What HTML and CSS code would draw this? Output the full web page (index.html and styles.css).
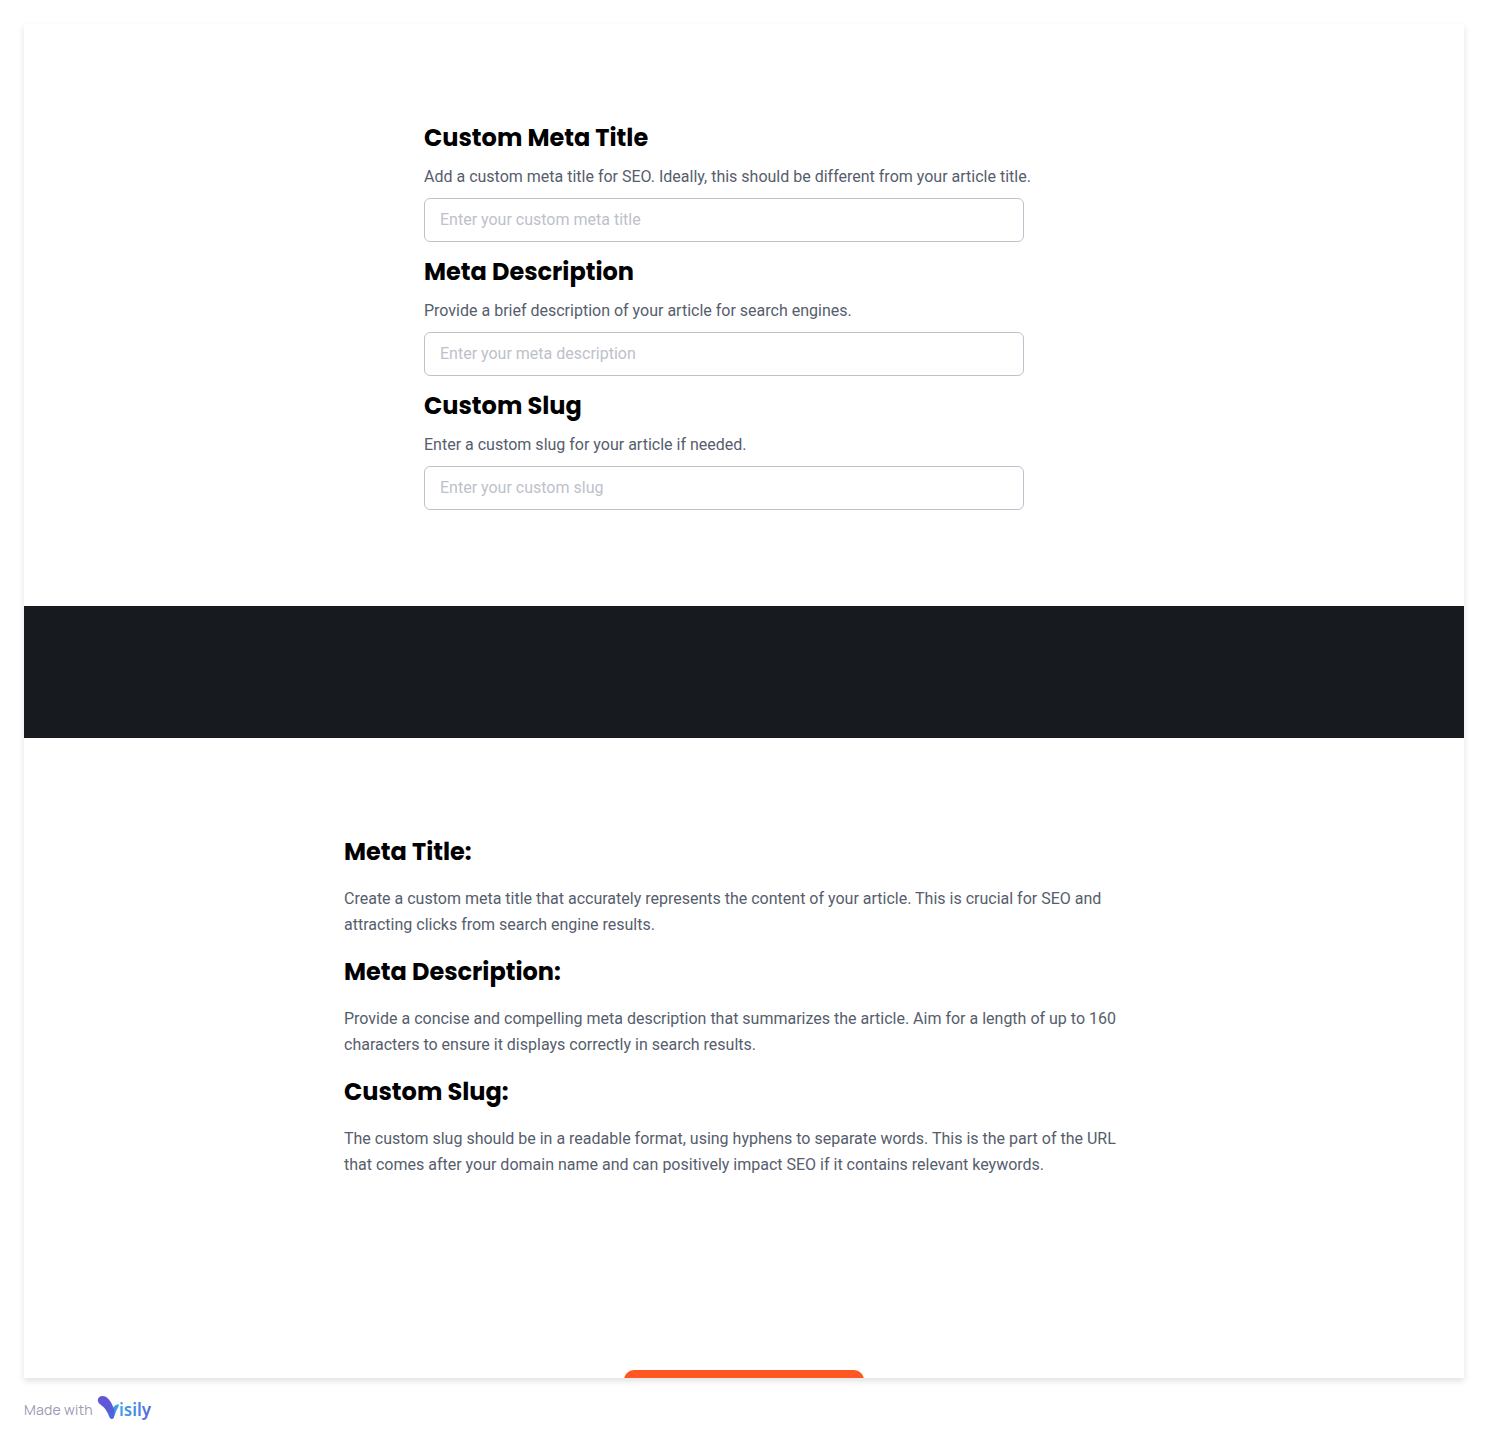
FILE: index.html
```html
<!DOCTYPE html>
<html lang="en">
<head>
<meta charset="utf-8">
<title>Article SEO settings</title>
<link rel="stylesheet" href="styles.css">
</head>
<body>
<main class="page">
  <form class="fields">
    <div class="field">
      <h2 class="heading"><label for="title">Custom Meta Title</label></h2>
      <p class="text hint">Add a custom meta title for SEO. Ideally, this should be different from your article title.</p>
      <input class="input" id="title" type="text" placeholder="Enter your custom meta title">
    </div>
    <div class="field">
      <h2 class="heading"><label for="description">Meta Description</label></h2>
      <p class="text hint">Provide a brief description of your article for search engines.</p>
      <input class="input" id="description" type="text" placeholder="Enter your meta description">
    </div>
    <div class="field">
      <h2 class="heading"><label for="slug">Custom Slug</label></h2>
      <p class="text hint">Enter a custom slug for your article if needed.</p>
      <input class="input" id="slug" type="text" placeholder="Enter your custom slug">
    </div>
  </form>
  <div class="band"></div>
  <section class="guide">
    <h2 class="heading">Meta Title:</h2>
    <p class="text">Create a custom meta title that accurately represents the content of your article. This is crucial for SEO and<br>attracting clicks from search engine results.</p>
    <h2 class="heading">Meta Description:</h2>
    <p class="text">Provide a concise and compelling meta description that summarizes the article. Aim for a length of up to 160<br>characters to ensure it displays correctly in search results.</p>
    <h2 class="heading">Custom Slug:</h2>
    <p class="text">The custom slug should be in a readable format, using hyphens to separate words. This is the part of the URL<br>that comes after your domain name and can positively impact SEO if it contains relevant keywords.</p>
  </section>
  <button class="action" type="button"></button>
</main>
<footer class="credit">
  <span class="made">Made with</span>
  <svg class="logo" width="56" height="28" viewBox="0 0 56 28">
    <defs>
      <linearGradient id="leaf" x1="0" y1="0" x2="0" y2="1"><stop offset="0" stop-color="#6654d6"/><stop offset=".6" stop-color="#5a5ad8"/><stop offset="1" stop-color="#4270e0"/></linearGradient>
      <linearGradient id="stem" x1="0" y1="1" x2="1" y2="0"><stop offset="0" stop-color="#4270e0"/><stop offset="1" stop-color="#35b4f2"/></linearGradient>
      <linearGradient id="word" gradientUnits="userSpaceOnUse" x1="22" y1="0" x2="54" y2="0"><stop offset="0" stop-color="#3ea2ea"/><stop offset=".65" stop-color="#4a82e4"/><stop offset="1" stop-color="#5a5fd8"/></linearGradient>
    </defs>
    <path d="M13.500 20C14.500 13 16.500 8.500 22 8.200C22 11.500 20 12.500 19 15.500L17.300 20Q16.500 23 14.500 23Z" fill="url(#stem)"/>
    <path d="M.8 4.300C.8 1.600 2.800 0 5.400 0C9.500 0 12.600 3.600 14.600 7.500C16 10.200 16.900 13 17.200 16.500C17.500 20 17.200 23 14.900 23C12.600 23 12.200 20.500 11 17.800C9.500 14.400 7.800 12 4.600 9.500C2.500 7.900 .8 6.700 .8 4.300Z" fill="url(#leaf)"/>
    <text class="word" x="22" y="20" textLength="32" lengthAdjust="spacingAndGlyphs" fill="url(#word)">isily</text>
  </svg>
</footer>
</body>
</html>
```
FILE: styles.css
```css
* { box-sizing: border-box; }
body {
  margin: 0;
  padding: 24px 24px 0;
  background: #fff;
  font-family: Roboto, sans-serif;
}
.page {
  display: flex;
  flex-direction: column;
  height: 1354px;
  overflow: hidden;
  background: #fff;
  box-shadow: 0 3px 6px rgba(23, 26, 31, .13);
}
.fields {
  display: flex;
  flex-direction: column;
  gap: 12px;
  padding: 96px 400px;
}
.field { display: flex; flex-direction: column; gap: 8px; }
.heading {
  margin: 0;
  font: 700 24px/36px Poppins, Inter, sans-serif;
  color: #000;
  white-space: nowrap;
}
.text {
  margin: 0;
  font-size: 16px;
  line-height: 26px;
  color: #565d6d;
  white-space: nowrap;
}
.input {
  width: 600px;
  height: 44px;
  padding: 0 15px 2px;
  border: 1px solid #bdc1ca;
  border-radius: 6px;
  background: transparent;
  font: 16px/26px Roboto, sans-serif;
}
.input::placeholder { color: #bdc1ca; opacity: 1; }
.band { flex: none; height: 132px; background: #171a1f; }
.guide {
  display: flex;
  flex-direction: column;
  gap: 16px;
  padding: 96px 320px;
}
.action {
  flex: none;
  align-self: center;
  width: 240px;
  height: 52px;
  margin-top: 96px;
  border: 0;
  border-radius: 10px;
  background: #ff5722;
}
.credit {
  display: flex;
  align-items: center;
  gap: 4px;
  height: 64px;
}
.made {
  width: 69px;
  font: 400 14px/20px Manrope, Inter, sans-serif;
  letter-spacing: .22px;
  color: #9d99b3;
  white-space: nowrap;
}
.word { font: 600 18.500px "Noto Sans", sans-serif; }
```
